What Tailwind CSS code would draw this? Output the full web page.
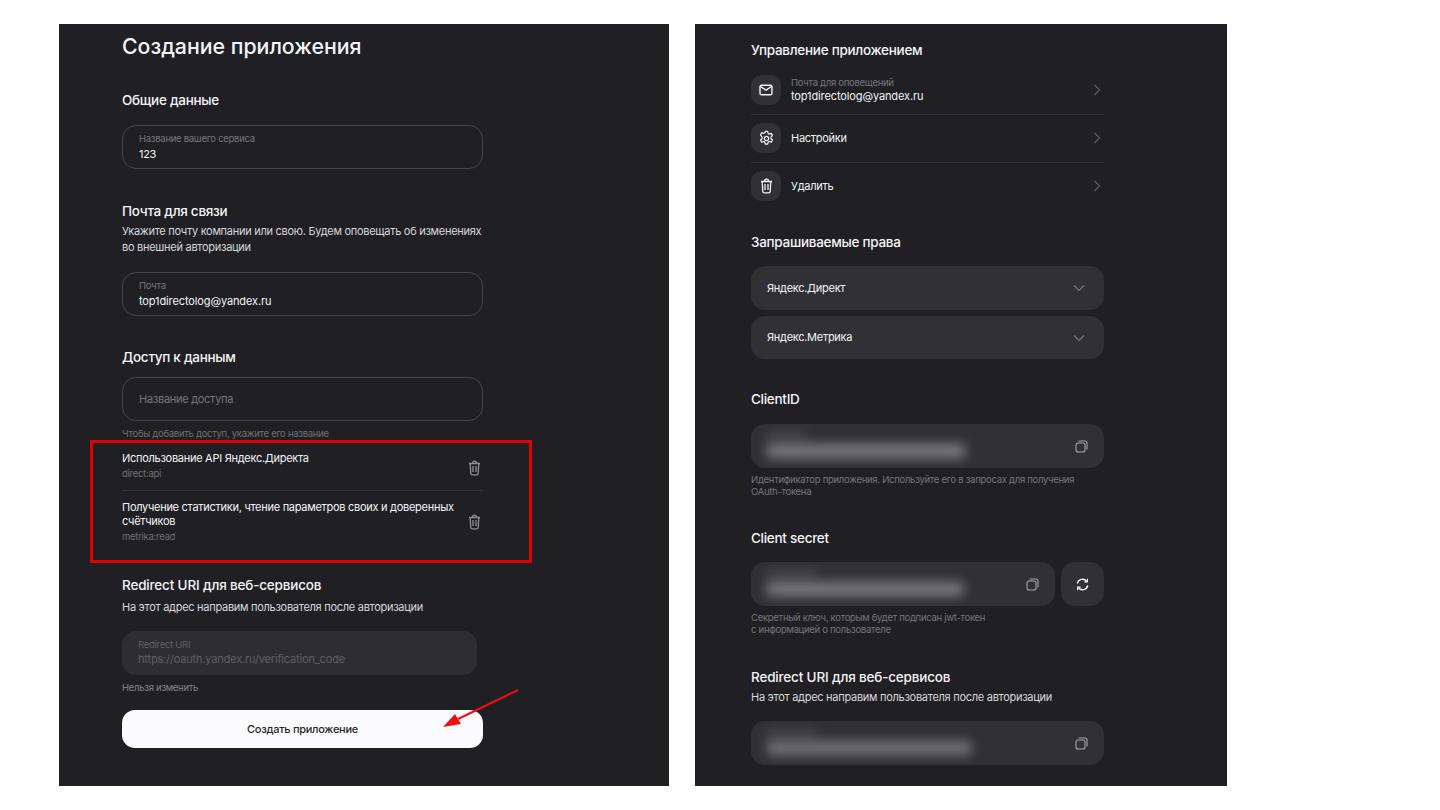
<!DOCTYPE html>
<html lang="ru">
<head>
<meta charset="UTF-8">
<title>Создание приложения</title>
<script src="https://cdn.jsdelivr.net/npm/@tailwindcss/browser@4"></script>
</head>
<body class="bg-white font-['Inter','Noto_Sans',sans-serif] text-[#f4f4f6] overflow-hidden">
<div class="relative h-[810px] w-[1440px] pt-6 flex items-start">

  <!-- создание приложения -->
  <section class="ml-[59px] w-[610px] h-[762px] bg-[#1f1f24] pl-[63px] overflow-hidden tracking-[-0.28px]">
    <div class="w-[361px]">
      <h1 class="mt-[7px] h-[30px] leading-[30px] text-[21.3px] font-medium whitespace-nowrap tracking-normal">Создание приложения</h1>

      <h2 class="mt-[29px] h-5 leading-5 text-[13.5px] font-medium">Общие данные</h2>
      <div class="mt-[15px] h-11 rounded-[14px] border border-[#46464c] pl-4 pt-[7px]">
        <div class="text-[9.5px] leading-3 text-[#76767c]">Название вашего сервиса</div>
        <div class="text-[11px] leading-[16px] mt-px">123</div>
      </div>

      <h2 class="mt-8 h-5 leading-5 text-[13.5px] font-medium">Почта для связи</h2>
      <p class="mt-[2px] text-[11px] leading-4 text-[#d8d8dc] whitespace-nowrap">Укажите почту компании или свою. Будем оповещать об изменениях<br>во внешней авторизации</p>
      <div class="mt-[17px] h-11 rounded-[14px] border border-[#46464c] pl-4 pt-[7px]">
        <div class="text-[9.5px] leading-3 text-[#76767c]">Почта</div>
        <div class="text-[11px] leading-[16px] mt-px tracking-[-0.12px]">top1directolog@yandex.ru</div>
      </div>

      <h2 class="mt-[31px] h-5 leading-5 text-[13.5px] font-medium">Доступ к данным</h2>
      <div class="mt-[10px] h-11 rounded-[14px] border border-[#46464c] pl-4 flex items-center text-[11px] text-[#76767c]">Название доступа</div>
      <p class="mt-[7px] text-[9.5px] leading-3 text-[#6f6f75]">Чтобы добавить доступ, укажите его название</p>

      <div class="mt-[11px] flex items-center justify-between h-[30px] mb-[9px]">
        <div>
          <div class="text-[11px] leading-[15px]">Использование API Яндекс.Директа</div>
          <div class="text-[9.5px] leading-[15px] text-[#6f6f75]">direct:api</div>
        </div>
        <svg class="mr-[2px] mt-1" width="13" height="16" viewBox="0 0 13 16" fill="none" stroke="#8f8f95" stroke-width="1.3"><path d="M1 3.5h11M4.5 3.2c0-1.3.6-2 2-2s2 .7 2 2M2.2 3.7l.6 9.8c.1.9.6 1.3 1.4 1.3h4.6c.8 0 1.3-.4 1.4-1.3l.6-9.8M5 6v6M8 6v6"/></svg>
      </div>
      <div class="border-t border-[#323237] pt-[9px] flex items-center justify-between">
        <div class="w-[340px]">
          <div class="text-[11px] leading-[14px]">Получение статистики, чтение параметров своих и доверенных счётчиков</div>
          <div class="text-[9.5px] leading-[15px] mt-px text-[#6f6f75]">metrika:read</div>
        </div>
        <svg class="mr-[2px]" width="13" height="16" viewBox="0 0 13 16" fill="none" stroke="#8f8f95" stroke-width="1.3"><path d="M1 3.5h11M4.5 3.2c0-1.3.6-2 2-2s2 .7 2 2M2.2 3.7l.6 9.8c.1.9.6 1.3 1.4 1.3h4.6c.8 0 1.3-.4 1.4-1.3l.6-9.8M5 6v6M8 6v6"/></svg>
      </div>

      <h2 class="mt-[31px] h-5 leading-5 text-[13.5px] font-medium whitespace-nowrap tracking-[-0.17px]">Redirect URI для веб-сервисов</h2>
      <p class="mt-[4px] text-[11px] leading-4 text-[#d8d8dc]">На этот адрес направим пользователя после авторизации</p>
      <div class="mt-[16px] w-[355px] h-11 rounded-[14px] bg-[#2e2e32] pl-4 pt-[8px]">
        <div class="text-[9.5px] leading-3 text-[#5e5e64]">Redirect URI</div>
        <div class="text-[11px] leading-[16px] text-[#5e5e64] tracking-[-0.17px]">https://oauth.yandex.ru/verification_code</div>
      </div>
      <p class="mt-[7px] text-[9.5px] leading-3 text-[#85858b]">Нельзя изменить</p>
      <button class="mt-[16px] w-full h-[38px] rounded-[13px] bg-[#fafaff] text-[#27272b] text-[11px] font-medium">Создать приложение</button>
    </div>
  </section>

  <!-- управление приложением -->
  <section class="ml-[26px] w-[532px] h-[762px] bg-[#1f1f24] pl-14 overflow-hidden tracking-[-0.28px]">
    <div class="w-[353px]">
      <h2 class="mt-4 h-5 leading-5 text-[13.5px] font-medium">Управление приложением</h2>

      <div class="mt-[15px] flex items-center h-[30px]">
        <div class="w-[30px] h-[30px] rounded-[10px] bg-[#303035] flex items-center justify-center">
          <svg width="14" height="12" viewBox="0 0 14 12" fill="none" stroke="#f4f4f6" stroke-width="1.4"><rect x="1" y="1.2" width="12" height="9.6" rx="1.6"/><path d="M1.5 2.5l5.5 3.6 5.5-3.6"/></svg>
        </div>
        <div class="ml-[10px] flex-1">
          <div class="text-[9.5px] leading-3 text-[#76767c]">Почта для оповещений</div>
          <div class="text-[11px] leading-[15px] tracking-[-0.12px]">top1directolog@yandex.ru</div>
        </div>
        <svg class="mr-[3px]" width="8" height="12" viewBox="0 0 8 12" fill="none" stroke="#5c5c62" stroke-width="1.3"><path d="M1.5 1l5 5-5 5"/></svg>
      </div>
      <div class="mt-[9px] border-t border-[#323237]"></div>

      <div class="mt-2 flex items-center h-[30px]">
        <div class="w-[30px] h-[30px] rounded-[10px] bg-[#303035] flex items-center justify-center">
          <svg width="17" height="17" viewBox="0 0 24 24" fill="none" stroke="#f4f4f6" stroke-width="1.7" stroke-linejoin="round"><path d="M10.3 2h3.4l.6 2.9 1.7.9 2.8-1 1.7 3-2.2 1.9v2.6l2.2 1.9-1.7 3-2.8-1-1.7.9-.6 2.9h-3.4l-.6-2.9-1.7-.9-2.8 1-1.7-3 2.2-1.9v-2.6L3.5 6.8l1.7-3 2.8 1 1.7-.9z"/><circle cx="12" cy="12" r="3"/></svg>
        </div>
        <div class="ml-[10px] flex-1 text-[11px]">Настройки</div>
        <svg class="mr-[3px]" width="8" height="12" viewBox="0 0 8 12" fill="none" stroke="#5c5c62" stroke-width="1.3"><path d="M1.5 1l5 5-5 5"/></svg>
      </div>
      <div class="mt-[9px] border-t border-[#323237]"></div>

      <div class="mt-2 flex items-center h-[30px]">
        <div class="w-[30px] h-[30px] rounded-[10px] bg-[#303035] flex items-center justify-center">
          <svg width="13" height="16" viewBox="0 0 13 16" fill="none" stroke="#f4f4f6" stroke-width="1.3"><path d="M1 3.5h11M4.5 3.2c0-1.3.6-2 2-2s2 .7 2 2M2.2 3.7l.6 9.8c.1.9.6 1.3 1.4 1.3h4.6c.8 0 1.3-.4 1.4-1.3l.6-9.8M5 6v6M8 6v6"/></svg>
        </div>
        <div class="ml-[10px] flex-1 text-[11px]">Удалить</div>
        <svg class="mr-[3px]" width="8" height="12" viewBox="0 0 8 12" fill="none" stroke="#5c5c62" stroke-width="1.3"><path d="M1.5 1l5 5-5 5"/></svg>
      </div>

      <h2 class="mt-[31px] h-5 leading-5 text-[13.5px] font-medium">Запрашиваемые права</h2>
      <div class="mt-[14px] h-11 rounded-[14px] bg-[#303035] pl-4 pr-[19px] flex items-center justify-between text-[11px]">
        <span>Яндекс.Директ</span>
        <svg width="12" height="8" viewBox="0 0 12 8" fill="none" stroke="#77777d" stroke-width="1.2"><path d="M1 1.5l5 5 5-5"/></svg>
      </div>
      <div class="mt-[6px] h-[43px] rounded-[14px] bg-[#303035] pl-4 pr-[19px] flex items-center justify-between text-[11px]">
        <span>Яндекс.Метрика</span>
        <svg width="12" height="8" viewBox="0 0 12 8" fill="none" stroke="#77777d" stroke-width="1.2"><path d="M1 1.5l5 5 5-5"/></svg>
      </div>

      <h2 class="mt-[30px] h-5 leading-5 text-[13.5px] font-medium">ClientID</h2>
      <div class="mt-[15px] h-11 rounded-[14px] bg-[#303035] relative flex items-center justify-end pr-[16px] overflow-hidden">
        <div class="absolute left-[16px] top-[8px] w-10 h-2 bg-[#4c4c50] blur-[6px]"></div>
        <div class="absolute left-[16px] top-[20px] w-[198px] h-[14px] bg-[#7c7c80] blur-[6px]"></div>
        <svg width="13" height="13" viewBox="0 0 13 13" fill="none" stroke="#a5a5ab" stroke-width="1.1"><rect x="1" y="3" width="9" height="9" rx="2"/><path d="M3.5 1h6.5a2 2 0 0 1 2 2v6.5"/></svg>
      </div>
      <p class="mt-[6px] text-[9.5px] leading-3 text-[#76767c]">Идентификатор приложения. Используйте его в запросах для получения<br>OAuth-токена</p>

      <h2 class="mt-[30px] h-5 leading-5 text-[13.5px] font-medium">Client secret</h2>
      <div class="mt-[14px] flex gap-[6px]">
        <div class="flex-1 h-11 rounded-[14px] bg-[#303035] relative flex items-center justify-end pr-[16px] overflow-hidden">
          <div class="absolute left-[16px] top-[8px] w-[50px] h-2 bg-[#4c4c50] blur-[6px]"></div>
          <div class="absolute left-[16px] top-[20px] w-[196px] h-[14px] bg-[#7c7c80] blur-[6px]"></div>
          <svg width="13" height="13" viewBox="0 0 13 13" fill="none" stroke="#a5a5ab" stroke-width="1.1"><rect x="1" y="3" width="9" height="9" rx="2"/><path d="M3.5 1h6.5a2 2 0 0 1 2 2v6.5"/></svg>
        </div>
        <div class="w-[43px] h-11 rounded-[14px] bg-[#303035] flex items-center justify-center">
          <svg width="13" height="13" viewBox="0 0 13 13" fill="none" stroke="#f4f4f6" stroke-width="1.4"><path d="M1.3 5.5A5.3 5.3 0 0 1 10.6 3.2M11.7 7.5A5.3 5.3 0 0 1 2.4 9.8"/><path d="M11.4 .8v3H8.4M1.6 12.2v-3h3" stroke-width="1.2"/></svg>
        </div>
      </div>
      <p class="mt-[6px] text-[9.5px] leading-3 text-[#76767c]">Секретный ключ, которым будет подписан jwt-токен<br>с информацией о пользователе</p>

      <h2 class="mt-[31px] h-5 leading-5 text-[13.5px] font-medium whitespace-nowrap tracking-[-0.17px]">Redirect URI для веб-сервисов</h2>
      <p class="mt-[2px] text-[11px] leading-4 text-[#d8d8dc]">На этот адрес направим пользователя после авторизации</p>
      <div class="mt-[16px] h-11 rounded-[14px] bg-[#303035] relative flex items-center justify-end pr-[16px] overflow-hidden">
        <div class="absolute left-[16px] top-[9px] w-[50px] h-2 bg-[#4c4c50] blur-[6px]"></div>
        <div class="absolute left-[16px] top-[20px] w-[204px] h-[14px] bg-[#747478] blur-[6px]"></div>
        <svg width="13" height="13" viewBox="0 0 13 13" fill="none" stroke="#a5a5ab" stroke-width="1.1"><rect x="1" y="3" width="9" height="9" rx="2"/><path d="M3.5 1h6.5a2 2 0 0 1 2 2v6.5"/></svg>
      </div>
    </div>
  </section>

  <!-- пометки поверх скриншота -->
  <div class="absolute left-[90px] top-[440px] w-[442px] h-[123px] border-[3px] border-[#e30000]"></div>
  <svg class="absolute left-[440px] top-[685px]" width="84" height="46" viewBox="0 0 84 46" fill="none">
    <path d="M78 5L18 34" stroke="#ee0f0f" stroke-width="2"/>
    <path d="M3 42L15 29l6 10z" fill="#ee0f0f"/>
  </svg>
</div>
</body>
</html>
